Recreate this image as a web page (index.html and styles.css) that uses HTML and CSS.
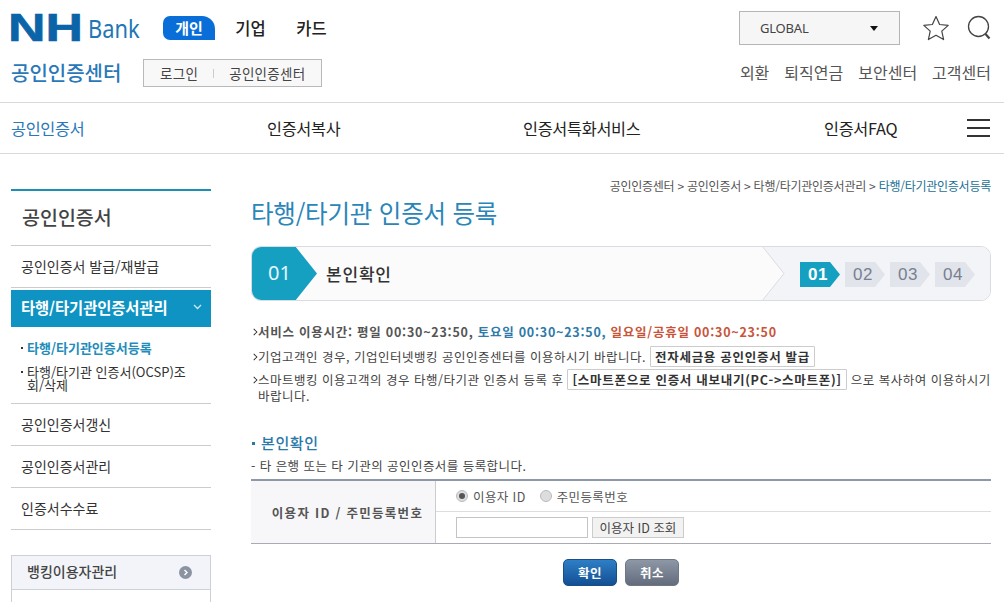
FILE: index.html
```html
<!DOCTYPE html>
<html lang="ko">
  <head>
    <meta charset="utf-8">
    <title>타행/타기관 인증서 등록</title>
    <link rel="stylesheet" href="styles.css">
  </head>
  <body>
    <header class="top">
      <div class="top-row">
        <a class="logo"><span class="logo-nh">NH</span><span class="logo-bank">Bank</span></a>
        <nav class="tabs">
          <a class="tab tab-on">개인</a>
          <a class="tab">기업</a>
          <a class="tab">카드</a>
        </nav>
        <div class="global"><span>GLOBAL</span><i class="caret"></i></div>
        <svg class="icon-star" width="28" height="26" viewBox="0 0 28 26"><path d="M14 1.5l3.6 8 8.6.9-6.4 5.7 1.8 8.5L14 20.2l-7.6 4.4 1.8-8.5-6.4-5.7 8.6-.9z" fill="none" stroke="#444" stroke-width="1.2" stroke-linejoin="round"/></svg>
        <svg class="icon-search" width="24" height="26" viewBox="0 0 24 26"><circle cx="11.500" cy="11.500" r="10" fill="none" stroke="#444" stroke-width="1.300"/><path d="M18.500 19l4 4.500" stroke="#444" stroke-width="2.200"/></svg>
      </div>
      <div class="sub-row">
        <strong class="center-name">공인인증센터</strong>
        <div class="center-links"><a>로그인</a><i class="sep"></i><a>공인인증센터</a></div>
        <nav class="util">
          <a>외환</a><a>퇴직연금</a><a>보안센터</a><a>고객센터</a>
        </nav>
      </div>
    </header>

    <nav class="gnb">
      <a class="gnb-on gnb-a">공인인증서</a>
      <a class="gnb-b">인증서복사</a>
      <a class="gnb-c">인증서특화서비스</a>
      <a class="gnb-d">인증서FAQ</a>
      <div class="burger"><i></i><i></i><i></i></div>
    </nav>

    <div class="wrap">
      <aside class="side">
        <h2 class="side-title">공인인증서</h2>
        <a class="side-item">공인인증서 발급/재발급</a>
        <a class="side-item side-on">타행/타기관인증서관리
          <svg width="9" height="6" viewBox="0 0 9 6"><path d="M1 1l3.500 3.500L8 1" fill="none" stroke="#cfe9f3" stroke-width="1.300"/></svg>
        </a>
        <ul class="side-sub">
          <li class="sub-on">타행/타기관인증서등록</li>
          <li>타행/타기관 인증서(OCSP)조회/삭제</li>
        </ul>
        <a class="side-item">공인인증서갱신</a>
        <a class="side-item">공인인증서관리</a>
        <a class="side-item">인증서수수료</a>
        <div class="side-box">
          <div class="side-box-head">뱅킹이용자관리<i class="go"><svg width="6" height="7" viewBox="0 0 6 7"><path d="M1.500 1l2.500 2.500L1.500 6" fill="none" stroke="#fff" stroke-width="1.400"/></svg></i></div>
        </div>
      </aside>

      <main class="main">
        <p class="crumb">공인인증센터 &gt; 공인인증서 &gt; 타행/타기관인증서관리 &gt; <b>타행/타기관인증서등록</b></p>
        <h1 class="page-title">타행/타기관 인증서 등록</h1>

        <div class="step-bar">
          <svg class="step-bg" width="229" height="55" viewBox="0 0 229 55"><path d="M1 0L23 27.500 1 55H229V0z" fill="#f3f4f7"/><path d="M1 0L23 27.500 1 55" fill="none" stroke="#d9dce0"/></svg>
          <div class="step-big">01</div>
          <div class="step-name">본인확인</div>
          <ol class="steps">
            <li class="step step-on">01</li>
            <li class="step">02</li>
            <li class="step">03</li>
            <li class="step">04</li>
          </ol>
        </div>

        <ul class="notice">
          <li class="notice-b">서비스 이용시간: 평일 00:30~23:50, <span class="c-blue">토요일 00:30~23:50,</span> <span class="c-red">일요일/공휴일 00:30~23:50</span></li>
          <li>기업고객인 경우, 기업인터넷뱅킹 공인인증센터를 이용하시기 바랍니다. <span class="tag">전자세금용 공인인증서 발급</span></li>
          <li>스마트뱅킹 이용고객의 경우 타행/타기관 인증서 등록 후 <span class="tag">[스마트폰으로 인증서 내보내기(PC-&gt;스마트폰)]</span> 으로 복사하여 이용하시기<br>바랍니다.</li>
        </ul>

        <h3 class="sec-title">본인확인</h3>
        <p class="sec-desc">- 타 은행 또는 타 기관의 공인인증서를 등록합니다.</p>

        <div class="form-table">
          <div class="form-label">이용자 ID / 주민등록번호</div>
          <div class="form-cell">
            <div class="form-line radios">
              <label class="radio"><i class="dot dot-on"></i>이용자 ID</label>
              <label class="radio"><i class="dot"></i>주민등록번호</label>
            </div>
            <div class="form-line inputs">
              <input class="txt" type="text">
              <button class="btn-sm" type="button">이용자 ID 조회</button>
            </div>
          </div>
        </div>

        <div class="actions">
          <button class="btn btn-ok" type="button">확인</button>
          <button class="btn btn-cancel" type="button">취소</button>
        </div>
      </main>
    </div>
  </body>
</html>
```

FILE: styles.css
```css
* { box-sizing: border-box; }
html, body { margin: 0; padding: 0; height: 602px; overflow: hidden; }
body {
  background: #fff;
  color: #333;
  font-family: "Noto Sans CJK KR", "Liberation Sans", sans-serif;
  font-size: 12px;
}
ul, ol { list-style: none; margin: 0; padding: 0; }
h1, h2, h3, p { margin: 0; font-weight: normal; }

/* header */
.top { height: 103px; padding: 0 13px 0 11px; border-bottom: 1px solid #d9d9d9; }
.top-row { display: flex; align-items: center; height: 56px; }
.logo { display: flex; align-items: center; width: 152px; }
.logo-nh {
  width: 77px;
  margin-left: -3px;
  margin-right: 3px;
  font-family: "Liberation Sans", sans-serif;
  font-size: 39px;
  font-weight: bold;
  line-height: 40px;
  color: #0b64a8;
  transform: scaleX(1.33);
  transform-origin: left center;
  -webkit-text-stroke: 0.6px #0b64a8;
}
.logo-bank {
  font-family: "Noto Sans", sans-serif;
  font-size: 26px;
  line-height: 32px;
  color: #2176b5;
  transform: scaleX(.84);
  transform-origin: left center;
}
.tabs { display: flex; align-items: center; }
.tab { font-size: 16.500px; font-weight: 500; color: #222; width: 61px; text-align: center; line-height: 24px; }
.tab-on {
  width: 52px;
  margin-right: 5px;
  background: #0a6ed8;
  color: #fff;
  font-size: 15px;
  font-weight: 700;
  border-radius: 7px 13px 0 7px;
}
.global {
  display: flex;
  align-items: center;
  justify-content: space-between;
  width: 161px;
  height: 34px;
  margin-left: auto;
  padding: 0 20px;
  background: #f6f6f6;
  border: 1px solid #b5b5b5;
  font-family: "Noto Sans", sans-serif;
  font-size: 13px;
  letter-spacing: -0.2px;
  color: #444;
}
.caret { width: 0; height: 0; border: 4px solid transparent; border-top: 5px solid #111; border-bottom: 0; margin-right: 1px; }
.icon-star { margin-left: 22px; }
.icon-search { margin-left: 17px; }

.sub-row { display: flex; align-items: center; height: 34px; }
.center-name { width: 132px; margin-bottom: 2px; font-size: 20px; font-weight: 500; color: #2a78b8; }
.center-links {
  display: flex;
  align-items: center;
  width: 179px;
  height: 28px;
  padding-left: 16px;
  background: #f8f8f8;
  border: 1px solid #b9b9b9;
  font-size: 13.500px;
  letter-spacing: 0.3px;
  color: #444;
}
.sep { width: 1px; height: 9px; margin: 0 15px; background: #ccc; }
.util { display: flex; gap: 15px; margin-left: auto; margin-bottom: 2px; font-size: 16px; color: #555; }

/* gnb */
.gnb {
  display: flex;
  align-items: center;
  height: 51px;
  padding: 0 13px 0 11px;
  border-bottom: 1px solid #d9d9d9;
  font-size: 16.300px;
  color: #222;
  letter-spacing: -0.3px;
}
.gnb-on { color: #2a78b8; }
.gnb-a { width: 256px; }
.gnb-b { width: 256px; }
.gnb-c { width: 301px; }
.gnb-d { width: 143px; }
.burger { display: flex; flex-direction: column; gap: 6px; width: 23px; }
.burger i { height: 2px; background: #333; }

/* layout */
.wrap { display: flex; gap: 40px; padding: 35px 13px 0 11px; }
.side { width: 200px; flex: none; }
.main { flex: 1; min-width: 0; margin-top: -11px; }

/* side menu */
.side-title {
  height: 57px;
  border-top: 2px solid #1d8fb3;
  border-bottom: 1px solid #ccc;
  padding: 11px 0 0 11px;
  font-size: 19.500px;
  font-weight: 500;
  color: #444;
}
.side-item {
  display: flex;
  align-items: center;
  height: 42px;
  padding: 0 0 2px 10px;
  border-bottom: 1px solid #ccc;
  font-size: 14px;
  color: #333;
}
.side-on {
  justify-content: space-between;
  height: 37px;
  margin-top: 2px;
  padding: 0 9px 3px 10px;
  background: #0e93c2;
  border-bottom: 0;
  color: #fff;
  font-size: 15.400px;
  font-weight: 700;
  letter-spacing: -0.1px;
}
.side-sub {
  height: 77px;
  padding: 14px 16px 0 10px;
  border-bottom: 1px solid #ccc;
  font-size: 13px;
  line-height: 13px;
  color: #333;
  word-break: break-all;
}
.side-sub li { position: relative; padding-left: 6px; }
.side-sub li::before { content: ""; position: absolute; left: 0; top: 6px; width: 2px; height: 2px; background: #333; }
.sub-on { color: #1f8dbb; font-weight: 700; margin-bottom: 11px; }
.side-box { height: 60px; margin-top: 25px; border: 1px solid #ccd1d8; border-bottom: 0; }
.side-box-head {
  display: flex;
  align-items: center;
  justify-content: space-between;
  height: 34px;
  padding: 0 18px 3px 15px;
  background: #f2f4f9;
  border-bottom: 1px solid #ccd1d8;
  font-size: 14px;
  font-weight: 500;
  color: #444;
}
.go { display: flex; align-items: center; justify-content: center; width: 13px; height: 13px; margin-top: 3px; border-radius: 50%; background: #8b93a3; }

/* title */
.crumb { text-align: right; font-size: 12px; line-height: 16px; color: #555; letter-spacing: -0.25px; }
.crumb b { font-weight: normal; color: #1a6f96; }
.page-title { padding-top: 1px; font-size: 24.500px; line-height: 35px; color: #2a86b8; letter-spacing: -0.2px; }

/* step bar */
.step-bar {
  position: relative;
  display: flex;
  align-items: center;
  height: 55px;
  margin-top: 16px;
  border: 1px solid #d9dce0;
  border-radius: 10px;
  overflow: hidden;
  background: #fbfbfc;
}
.step-bg { position: absolute; right: 0; top: -1px; }
.step-big {
  width: 66px;
  height: 55px;
  margin: -1px 9px -1px -1px;
  padding-left: 17px;
  background: #15a0c2;
  clip-path: polygon(0 0, 44px 0, 66px 27.500px, 44px 55px, 0 55px);
  font-family: "Noto Sans", sans-serif;
  font-size: 20px;
  line-height: 53px;
  color: #e4f6fa;
}
.step-name { font-size: 17px; font-weight: 500; letter-spacing: 0.8px; color: #333; }
.steps { position: relative; display: flex; gap: 5px; margin: 2px 15px 0 auto; }
.step {
  width: 40px;
  height: 25px;
  padding-left: 8px;
  background: #e1e4eb;
  clip-path: polygon(0 0, 30px 0, 40px 12.500px, 30px 25px, 0 25px);
  font-family: "Liberation Sans", sans-serif;
  font-size: 17px;
  line-height: 25px;
  color: #788090;
  letter-spacing: 0.5px;
}
.step-on { background: #15a0c2; color: #fff; font-weight: bold; }

/* notice */
.notice { margin-top: 23px; font-size: 12.500px; line-height: 16px; color: #444; letter-spacing: 0.5px; }
.notice li { position: relative; padding-left: 7px; margin-bottom: 7px; }
.notice li::before {
  content: "";
  position: absolute;
  left: 0;
  top: 5px;
  width: 5px;
  height: 5px;
  border-top: 1.500px solid #222;
  border-right: 1.500px solid #222;
  transform: rotate(45deg) scale(.8);
}
.notice .notice-b { margin-bottom: 9px; font-weight: 700; color: #555; letter-spacing: 0.75px; }
.c-blue { color: #2f7aa8; }
.c-red { color: #c8553a; }
.tag { padding: 0 4px; border: 1px solid #ccc; border-radius: 1px; font-weight: 700; color: #333; letter-spacing: 0.72px; }

/* form */
.sec-title { position: relative; margin-top: 29px; padding-left: 10px; font-size: 15px; font-weight: 500; line-height: 20px; color: #2a78a8; letter-spacing: 0.6px; }
.sec-title::before { content: ""; position: absolute; left: 1px; top: 9px; width: 3px; height: 3px; background: #2a78a8; }
.sec-desc { margin-top: 5px; font-size: 12.500px; line-height: 16px; color: #444; letter-spacing: 0.45px; }
.form-table { display: flex; height: 65px; margin-top: 5px; border-top: 2px solid #8d99a8; border-bottom: 1px solid #a8acb2; }
.form-label {
  display: flex;
  align-items: center;
  justify-content: center;
  width: 185px;
  padding-left: 9px;
  background: #f7f7fa;
  border-right: 1px solid #ccc;
  font-size: 12.500px;
  font-weight: 700;
  color: #555;
  letter-spacing: 1.3px;
}
.form-cell { flex: 1; }
.form-line { display: flex; align-items: center; padding-left: 20px; }
.radios { height: 31px; gap: 14px; border-bottom: 1px solid #ddd; }
.inputs { height: 31px; gap: 4px; }
.radio { display: flex; align-items: center; gap: 5px; font-size: 12.500px; letter-spacing: 0.4px; color: #555; }
.dot { display: flex; align-items: center; justify-content: center; width: 12px; height: 12px; border-radius: 50%; background: #ddd; border: 1px solid #bbb; }
.dot-on::after { content: ""; width: 6px; height: 6px; border-radius: 50%; background: #555; }
.txt { width: 132px; height: 21px; padding: 0; border: 1px solid #c4c4c4; background: #fff; }
.btn-sm {
  height: 21px;
  width: 92px;
  padding: 0;
  background: #f2f2f2;
  border: 1px solid #ccc;
  font-family: inherit;
  font-size: 12.500px;
  color: #444;
}
.actions { display: flex; justify-content: center; gap: 8px; margin-top: 15px; }
.btn {
  width: 54px;
  height: 27px;
  padding: 0;
  border-radius: 5px;
  font-family: inherit;
  font-size: 12.500px;
  font-weight: 700;
  letter-spacing: 0.5px;
  color: #fff;
}
.btn-ok { background: linear-gradient(#2e7fc6, #134f94); border: 1px solid #1a4f85; }
.btn-cancel { background: linear-gradient(#8d97a6, #626c7c); border: 1px solid #6f7786; }
```
